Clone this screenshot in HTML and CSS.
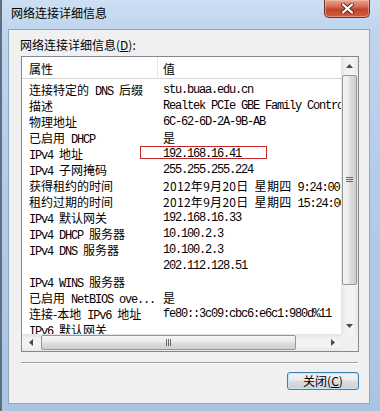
FILE: index.html
```html
<!DOCTYPE html>
<html lang="zh-CN">
<head>
  <meta charset="UTF-8">
  <title>网络连接详细信息</title>
  <link rel="stylesheet" href="styles.css">
</head>
<body>
  <div class="window">
    <div class="titlebar">
      <span class="title">网络连接详细信息</span>
      <div class="close">
        <svg width="13" height="11" viewBox="0 0 13 11">
          <path d="M2 1.5L11 9.5M11 1.5L2 9.5" stroke="#5a2a22" stroke-width="4" stroke-linecap="round"/>
          <path d="M2 1.5L11 9.5M11 1.5L2 9.5" stroke="#fff" stroke-width="2.2" stroke-linecap="round"/>
        </svg>
      </div>
    </div>

    <div class="client">
      <div class="caption">网络连接详细信息(<u>D</u>):</div>

      <div class="listview">
        <div class="list-main">
          <div class="header">
            <div class="c1">属性</div>
            <div class="c2">值</div>
          </div>
          <div class="rows">
            <div class="row"><div class="c1">连接特定的<span class="en"> DNS </span>后缀</div><div class="c2 en">stu.buaa.edu.cn</div></div>
            <div class="row"><div class="c1">描述</div><div class="c2 en">Realtek PCIe GBE Family Controller</div></div>
            <div class="row"><div class="c1">物理地址</div><div class="c2 en">6C-62-6D-2A-9B-AB</div></div>
            <div class="row"><div class="c1">已启用<span class="en"> DHCP</span></div><div class="c2">是</div></div>
            <div class="row"><div class="c1"><span class="en">IPv4 </span>地址</div><div class="c2 en">192.168.16.41</div><span class="mark"></span></div>
            <div class="row"><div class="c1"><span class="en">IPv4 </span>子网掩码</div><div class="c2 en">255.255.255.224</div></div>
            <div class="row"><div class="c1">获得租约的时间</div><div class="c2"><span class="date">2012年9月20日 星期四</span><span class="en"> 9:24:00</span></div></div>
            <div class="row"><div class="c1">租约过期的时间</div><div class="c2"><span class="date">2012年9月20日 星期四</span><span class="en"> 15:24:00</span></div></div>
            <div class="row"><div class="c1"><span class="en">IPv4 </span>默认网关</div><div class="c2 en">192.168.16.33</div></div>
            <div class="row"><div class="c1"><span class="en">IPv4 DHCP </span>服务器</div><div class="c2 en">10.100.2.3</div></div>
            <div class="row"><div class="c1"><span class="en">IPv4 DNS </span>服务器</div><div class="c2 en">10.100.2.3</div></div>
            <div class="row"><div class="c1"></div><div class="c2 en">202.112.128.51</div></div>
            <div class="row"><div class="c1"><span class="en">IPv4 WINS </span>服务器</div><div class="c2"></div></div>
            <div class="row"><div class="c1">已启用<span class="en"> NetBIOS ove...</span></div><div class="c2">是</div></div>
            <div class="row"><div class="c1">连接-本地<span class="en"> IPv6 </span>地址</div><div class="c2 en">fe80::3c09:cbc6:e6c1:980d%11</div></div>
            <div class="row"><div class="c1"><span class="en">IPv6 </span>默认网关</div><div class="c2"></div></div>
          </div>
        </div>

        <div class="vscroll">
          <div class="arrow"><svg width="7" height="4" viewBox="0 0 7 4"><path d="M0 4L3.5 0L7 4Z"/></svg></div>
          <div class="vthumb">
            <svg width="7" height="6" viewBox="0 0 7 6"><path d="M0 0.5H7M0 2.5H7M0 4.5H7" stroke="#666" stroke-width="1"/></svg>
          </div>
          <div class="fill"></div>
          <div class="arrow"><svg width="7" height="4" viewBox="0 0 7 4"><path d="M0 0L3.5 4L7 0Z"/></svg></div>
        </div>

        <div class="hscroll">
          <div class="arrow"><svg width="4" height="7" viewBox="0 0 4 7"><path d="M4 0L0 3.5L4 7Z"/></svg></div>
          <div class="hthumb">
            <svg width="6" height="7" viewBox="0 0 6 7"><path d="M0.5 0V7M2.5 0V7M4.5 0V7" stroke="#666" stroke-width="1"/></svg>
          </div>
          <div class="fill"></div>
          <div class="arrow"><svg width="4" height="7" viewBox="0 0 4 7"><path d="M0 0L4 3.5L0 7Z"/></svg></div>
        </div>

        <div class="corner"></div>
      </div>

      <div class="sep"></div>

      <div class="actions">
        <button class="btn" type="button">关闭(<u>C</u>)</button>
      </div>
    </div>
  </div>
</body>
</html>
```

FILE: styles.css
```css
* {
  box-sizing: border-box;
}
body {
  margin: 0;
  width: 380px;
  height: 411px;
  overflow: hidden;
  font-family: "Noto Sans CJK SC", sans-serif;
  font-size: 12px;
  color: #000;
  background: #b0c9e6;
}
.window {
  height: 411px;
  padding: 0 10px 7px 6px;
  border-left: 2px solid #5f6f80;
  background: linear-gradient(to bottom, #cddff3 0, #bfd5ee 29px, #b2cbe8 200px, #aac5e4 100%);
}
.titlebar {
  height: 29px;
  display: flex;
  justify-content: space-between;
  align-items: flex-start;
}
.title {
  padding: 5px 0 0 3px;
  line-height: 16px;
}
.close {
  width: 46px;
  height: 18px;
  border: 1px solid #6e3329;
  border-top: none;
  border-radius: 0 0 5px 5px;
  background: linear-gradient(to bottom, #e8a597 0, #d46a55 40%, #c2432a 55%, #d0603f 100%);
  box-shadow: inset 0 0 0 1px rgba(255, 210, 190, 0.45);
  display: flex;
  align-items: center;
  justify-content: center;
}
.client {
  height: 375px;
  border: 1px solid #93a6bd;
  background: #f0f0f0;
  padding: 7px 10px 0 12px;
}
.caption {
  height: 16px;
  line-height: 16px;
  margin: 0 0 3px -1px;
}
.listview {
  width: 338px;
  display: grid;
  grid-template-columns: 319px 17px;
  grid-template-rows: 277px 17px;
  border: 1px solid #828790;
  background: #fff;
}
.list-main {
  overflow: hidden;
}
.header {
  display: flex;
  height: 22px;
  line-height: 24px;
  border-bottom: 1px solid #d5d5d5;
}
.header .c1 {
  width: 135px;
  padding-left: 7px;
}
.header .c2 {
  flex: 1;
  border-left: 1px solid #e5e5e5;
  padding-left: 5px;
}
.rows {
  padding-top: 3px;
}
.row {
  position: relative;
  display: flex;
  height: 16px;
  line-height: 16px;
  white-space: nowrap;
}
.row .c1 {
  width: 135px;
  flex: none;
  padding-left: 7px;
  overflow: hidden;
}
.row .c2 {
  padding-left: 6px;
}
.en {
  font-family: "Liberation Mono", monospace;
  letter-spacing: -1.2px;
}
.date {
  letter-spacing: 0.3px;
  word-spacing: 3px;
}
.mark {
  position: absolute;
  left: 118px;
  top: 0;
  width: 127px;
  height: 13px;
  border: 1px solid #c1272d;
}
.vscroll {
  display: flex;
  flex-direction: column;
  background: linear-gradient(to right, #e4e4e4, #f2f2f2 30%, #f4f4f4 70%, #e8e8e8);
}
.hscroll {
  display: flex;
  background: linear-gradient(to bottom, #e4e4e4, #f2f2f2 30%, #f4f4f4 70%, #e8e8e8);
}
.arrow {
  width: 17px;
  height: 17px;
  flex: none;
  display: flex;
  align-items: center;
  justify-content: center;
}
.arrow svg {
  fill: #4a4a4a;
}
.fill {
  flex: 1;
}
.vthumb {
  height: 210px;
  margin: 1px 1px 0;
  border: 1px solid #959595;
  border-radius: 2px;
  background: linear-gradient(to right, #f5f5f5, #ebebeb 45%, #dcdcdc 55%, #cfcfcf);
  display: flex;
  align-items: center;
  justify-content: center;
}
.hthumb {
  width: 255px;
  margin: 1px 0 1px 2px;
  border: 1px solid #959595;
  border-radius: 2px;
  background: linear-gradient(to bottom, #f5f5f5, #ebebeb 45%, #dcdcdc 55%, #cfcfcf);
  display: flex;
  align-items: center;
  justify-content: center;
}
.corner {
  background: #f0f0f0;
}
.sep {
  height: 2px;
  margin: 10px 1px 0 0;
  border-top: 1px solid #a0a0a0;
  border-bottom: 1px solid #fff;
}
.actions {
  display: flex;
  justify-content: flex-end;
  margin-top: 8px;
}
.btn {
  width: 72px;
  height: 18px;
  padding: 0;
  border: 1px solid #3c7fb1;
  border-radius: 3px;
  background: linear-gradient(to bottom, #f2f2f2, #ebebeb 45%, #dddddd 50%, #cfcfcf);
  box-shadow: inset 0 0 0 1px #c3e6f8;
  font-family: "Noto Sans CJK SC", sans-serif;
  font-size: 12px;
  line-height: 16px;
  color: #000;
}
```
